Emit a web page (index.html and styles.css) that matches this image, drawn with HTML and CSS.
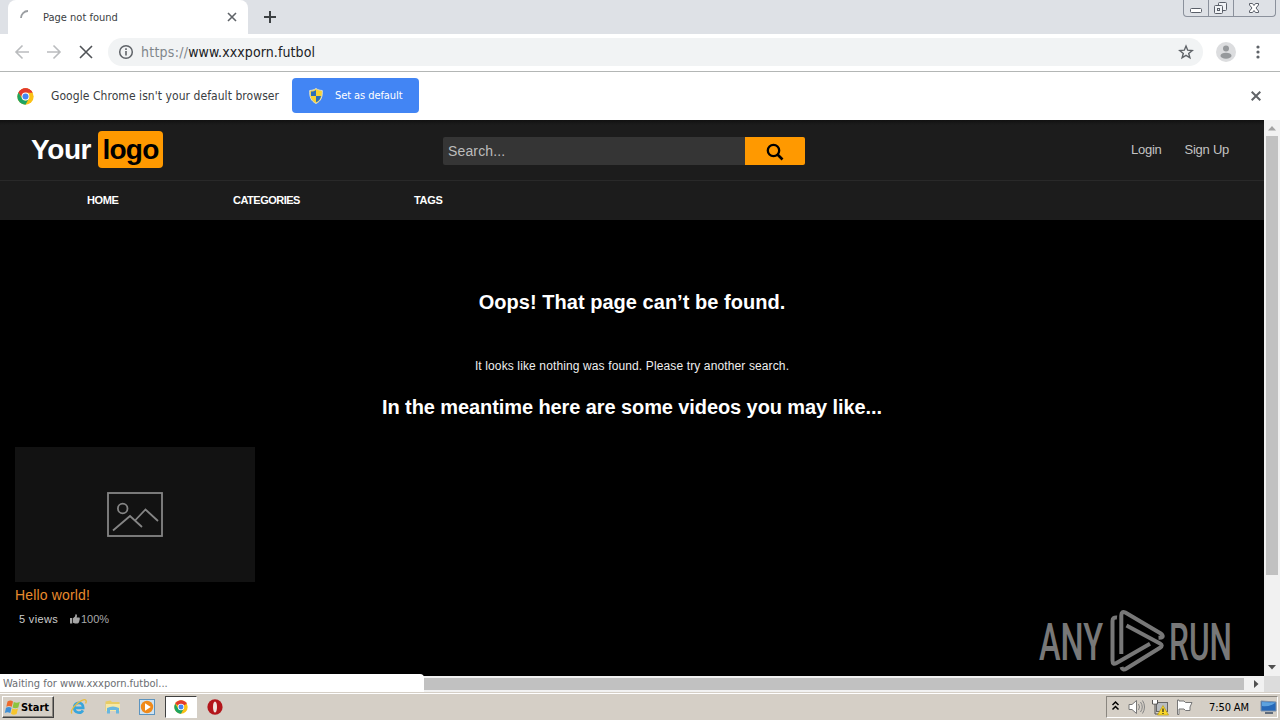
FILE: index.html
```
<!DOCTYPE html>
<html lang="en">
<head>
  <meta charset="utf-8">
  <title>Page not found</title>
  <link rel="stylesheet" href="styles.css">
</head>
<body>
<div class="screen">

  <div class="tabstrip">
    <div class="tab">
      <svg class="spinner" width="16" height="16" viewBox="0 0 16 16"><path d="M1 9A7 7 0 0 1 8 2" fill="none" stroke="#9a9da1" stroke-width="1.800"/></svg>
      <span class="tab-title">Page not found</span>
      <svg class="tab-close" width="10" height="10" viewBox="0 0 10 10"><path d="M1 1l8 8M9 1l-8 8" stroke="#5f6368" stroke-width="1.600"/></svg>
    </div>
    <svg class="tab-new" width="14" height="14" viewBox="0 0 14 14"><path d="M7 1v12M1 7h12" stroke="#3c4043" stroke-width="2"/></svg>
    <div class="win-buttons">
      <span class="win-btn"><svg width="24" height="16"><rect x="6.500" y="8.500" width="11" height="4" rx="1" fill="#fff" stroke="#5a5f69"/></svg></span>
      <span class="win-btn"><svg width="24" height="16"><g fill="#f1f3f6" stroke="#5a5f69"><rect x="9.500" y="2.500" width="8" height="8" rx="1"/><rect x="5.500" y="5.500" width="8" height="8" rx="1"/><rect x="8.500" y="8.500" width="2" height="2"/></g></svg></span>
      <span class="win-btn wide"><svg width="40" height="16"><path d="M15.500 3.500h3l1.500 2 1.500-2h3v1.500l-2.500 3 2.500 3v1.500h-3l-1.500-2-1.500 2h-3v-1.500l2.500-3-2.500-3z" fill="#fff" stroke="#5a5f69"/></svg></span>
    </div>
  </div>

  <div class="toolbar">
    <svg class="nav-icon" width="16" height="16" viewBox="0 0 16 16"><path d="M15 8H2M8.500 1.500L2 8l6.500 6.500" fill="none" stroke="#babcbe" stroke-width="1.600"/></svg>
    <svg class="nav-icon" width="16" height="16" viewBox="0 0 16 16"><path d="M1 8h13M7.500 1.500L14 8l-6.500 6.500" fill="none" stroke="#babcbe" stroke-width="1.600"/></svg>
    <svg class="nav-icon" width="16" height="16" viewBox="0 0 16 16"><path d="M2 2l12 12M14 2L2 14" stroke="#505357" stroke-width="1.600"/></svg>
    <div class="omnibox">
      <svg width="16" height="16" viewBox="0 0 16 16"><circle cx="8" cy="8" r="6.300" fill="none" stroke="#5f6368" stroke-width="1.500"/><path d="M8 7v4.500M8 4.300v1.600" stroke="#5f6368" stroke-width="1.600"/></svg>
      <span class="url"><span class="scheme">https://</span>www.xxxporn.futbol</span>
      <svg class="star" width="16" height="16" viewBox="0 0 16 16"><path d="M8 2l1.700 4.200 4.500.3-3.500 2.900 1.200 4.400L8 11.400l-3.900 2.400 1.200-4.400L1.800 6.500l4.500-.3z" fill="none" stroke="#5f6368" stroke-width="1.400"/></svg>
    </div>
    <svg class="avatar" width="20" height="20" viewBox="0 0 20 20"><circle cx="10" cy="10" r="10" fill="#dcdddf"/><circle cx="10" cy="6.500" r="3" fill="#96999c"/><ellipse cx="10" cy="13.700" rx="5.500" ry="3" fill="#96999c"/></svg>
    <svg width="4" height="14" viewBox="0 0 4 14"><g fill="#5f6368"><circle cx="2" cy="2" r="1.600"/><circle cx="2" cy="7" r="1.600"/><circle cx="2" cy="12" r="1.600"/></g></svg>
  </div>

  <div class="infobar">
    <svg width="17" height="17" viewBox="0 0 48 48"><circle cx="24" cy="24" r="23" fill="#fbc116"/><path d="M24 24L4.100 12.500A23 23 0 0 1 43.900 12.500H24z" fill="#e33b2e"/><path d="M24 13A11 11 0 0 0 14 29L4.100 12.500A23 23 0 0 1 43.900 12.500z" fill="#e33b2e"/><path d="M4.100 12.500A23 23 0 0 0 24 47l9.500-17.500A11 11 0 0 1 14 29z" fill="#1da462"/><circle cx="24" cy="24" r="11" fill="#fff"/><circle cx="24" cy="24" r="8.500" fill="#4586f3"/></svg>
    <span class="infobar-text">Google Chrome isn't your default browser</span>
    <div class="default-btn">
      <svg width="14" height="16" viewBox="0 0 14 16"><path d="M7 .5C5 2 3 2.300.7 2.500.4 9 2 13 7 15.500 12 13 13.600 9 13.300 2.500 11 2.300 9 2 7 .5z" fill="#f8d333"/><path d="M7 2C5.500 3 4 3.500 2 3.600V8h5zM7 8h5c-.4 3-2 5-5 6.300z" fill="#2c6fb8"/><path d="M7 .5C5 2 3 2.300.7 2.500.4 9 2 13 7 15.500 12 13 13.600 9 13.300 2.500 11 2.300 9 2 7 .5z" fill="none" stroke="#d9dccf"/></svg>
      <span>Set as default</span>
    </div>
    <svg class="infobar-close" width="10" height="10" viewBox="0 0 10 10"><path d="M.7.700l8.600 8.600M9.300.700L.7 9.300" stroke="#606367" stroke-width="2"/></svg>
  </div>

  <div class="viewport">
    <div class="page">
      <div class="header">
        <div class="logo"><span class="logo-first">Your</span><span class="logo-box">logo</span></div>
        <div class="search">
          <div class="search-input">Search...</div>
          <div class="search-btn"><svg width="18" height="18" viewBox="0 0 18 18"><circle cx="7.500" cy="7.500" r="5.700" fill="none" stroke="#000" stroke-width="2.300"/><path d="M11.500 11.500l5 5" stroke="#000" stroke-width="2.600"/></svg></div>
        </div>
        <div class="account"><span class="login">Login</span><span class="signup">Sign Up</span></div>
      </div>
      <div class="menu">
        <span class="m-home">HOME</span><span class="m-cat">CATEGORIES</span><span class="m-tags">TAGS</span>
      </div>
      <div class="content">
        <h1>Oops! That page can’t be found.</h1>
        <p class="nothing">It looks like nothing was found. Please try another search.</p>
        <h2>In the meantime here are some videos you may like...</h2>
        <div class="video">
          <div class="thumb"><svg width="56" height="45" viewBox="0 0 56 45"><g fill="none" stroke="#858585" stroke-width="1.800"><rect x="1" y="1" width="54" height="43"/><circle cx="15.700" cy="16.500" r="4.800"/><path d="M6 38.500L23 24l12 11M28.500 28L38.500 17.500 51 29"/></g></svg></div>
          <div class="video-title">Hello world!</div>
          <div class="video-meta">
            <span class="views">5 views</span>
            <svg width="10" height="10" viewBox="0 0 10 10"><path d="M0 4h2.300v5.500H0zM3 4.300L5 2.500 5.500.3C7 0 7.300 1.500 6.600 3.500h2.500c1 .2.900 1.200.4 1.600.4.500.3 1.200-.2 1.500.2.600 0 1.100-.4 1.300.1 1-.5 1.500-1.400 1.500H5L3 8.700z" fill="#a5a5a5"/></svg>
            <span class="rate">100%</span>
          </div>
        </div>
      </div>
      <svg class="watermark" width="205" height="68" viewBox="0 0 205 68">
        <text x="4" y="52" font-size="52" textLength="64" lengthAdjust="spacingAndGlyphs">ANY</text>
        <text x="134" y="52" font-size="52" textLength="63" lengthAdjust="spacingAndGlyphs">RUN</text>
        <g fill="none" stroke="#787878" stroke-width="4" stroke-linejoin="round">
          <path d="M82 9.500Q77.500 9 77.500 13v39.500q0 5 4 2.500L115 35.700"/>
          <path d="M86.300 46V7.500q0-5 4-3L125 25q4.500 3 1.500 4.500l-3 .2"/>
          <path d="M91.500 17.500L125 35.500q3.500 2 0 4.300L91.500 60.500q-4 2.500-5-1.500"/>
        </g>
      </svg>
    </div>
    <div class="scroll-v">
      <svg width="16" height="16"><path d="M4 10.500h8L8 6z" fill="#a3a3a3"/></svg>
      <div class="thumb-v"></div>
      <svg width="16" height="16"><path d="M4 5h8l-4 4.500z" fill="#505050"/></svg>
    </div>
  </div>

  <div class="bottom">
    <div class="status">Waiting for www.xxxporn.futbol...</div>
    <div class="thumb-h"></div>
    <svg width="20" height="16"><path d="M10 4v8l4.500-4z" fill="#505050"/></svg>
    <div class="corner"></div>
  </div>

  <div class="taskbar">
    <div class="start">
      <svg width="17" height="17" viewBox="0 0 17 17"><path d="M3.500 2.500q3-2 5.500 0L7.800 7.800q-3-1.800-5.500 0z" fill="#ee6a2c"/><path d="M9.800 3q3 1.700 6-.2L14.300 8.500q-3 1.500-5.700 0z" fill="#8cc43e"/><path d="M2 8.800q3-1.800 5.500 0L6.300 14q-3-1.700-5.500 0z" fill="#3f8fd6"/><path d="M8.300 9.500q3 1.600 5.700 0L12.600 15q-3 1.600-5.600-.2z" fill="#f7c52d"/></svg>
      <span class="start-text">Start</span>
    </div>
    <div class="quick">
      <svg width="18" height="18" viewBox="0 0 18 18"><path d="M4.500 9.800h8.700C13.500 3.200 4.200 3.400 4.200 9.600c0 6 7 6.200 8.700 2.700" fill="none" stroke="#38a5dc" stroke-width="2.700"/><path d="M2 15.500C-.5 13 6 4.500 12 2.300c4-1.500 5 .2 3.600 3.200" fill="none" stroke="#e8bd3e" stroke-width="1.300"/></svg>
      <svg width="18" height="18" viewBox="0 0 18 18"><path d="M1.500 3.500l5-1 1.500 1.500h7.500v9h-14z" fill="#e8cc65"/><path d="M2 6h14v7H2z" fill="#f6e8a5"/><path d="M3 15.500V10q6-3 12 0v5.500h-3V12H6v3.500z" fill="#68b7df"/></svg>
      <svg width="18" height="18" viewBox="0 0 18 18"><rect x="1.500" y="1.500" width="15" height="15" fill="#cfe3f2" stroke="#5c94bf"/><circle cx="9" cy="9" r="6.200" fill="#f08a1a"/><path d="M7 5.200v7.600L12.800 9z" fill="#fff"/></svg>
      <div class="active"><svg width="14" height="14" viewBox="0 0 48 48"><circle cx="24" cy="24" r="23" fill="#fbc116"/><path d="M24 24L4.100 12.500A23 23 0 0 1 43.900 12.500z" fill="#e33b2e"/><path d="M4.100 12.500A23 23 0 0 0 24 47l9.500-17.500L14 29z" fill="#1da462"/><circle cx="24" cy="24" r="11" fill="#fff"/><circle cx="24" cy="24" r="8.500" fill="#4586f3"/></svg></div>
      <svg width="18" height="18" viewBox="0 0 18 18"><ellipse cx="9" cy="9" rx="7.600" ry="7.800" fill="#b3161b"/><ellipse cx="9" cy="9" rx="2" ry="5.500" fill="#f0e5e0"/></svg>
    </div>
    <div class="tray">
      <svg width="9" height="14" viewBox="0 0 9 14"><path d="M1.500 5l3-3 3 3M1.500 9.500l3-3 3 3" fill="none" stroke="#000" stroke-width="1.500"/></svg>
      <svg class="ic-sound" width="18" height="16" viewBox="0 0 18 16"><path d="M1 5.500h3l4.500-4v13l-4.500-4H1z" fill="#fff" stroke="#777"/><path d="M10.500 5q2 3 0 6M12.500 3q3.500 5 0 10M14.500 1.500q4 6.500 0 13" fill="none" stroke="#858585"/></svg>
      <svg class="ic-net" width="17" height="17" viewBox="0 0 17 17"><rect x="4.500" y="3.500" width="11" height="9" fill="#b8bcc0" stroke="#666"/><path d="M.5 1v4h5V1M3 5v10h4" fill="none" stroke="#555"/><path d="M1 1h4v3.500H1z" fill="#fff"/><path d="M11 6.500L16.500 16h-11z" fill="#f9d72b" stroke="#b39300" stroke-width=".6"/><path d="M11 9.500v3.500M11 14v1" stroke="#222" stroke-width="1.200"/></svg>
      <svg class="ic-flag" width="17" height="16" viewBox="0 0 17 16"><path d="M1.500 1v14.500h1.500V10h5l1.500 1.500H14V8l2-4.500H9.500L8 2H3V1z" fill="#fff" stroke="#777"/></svg>
      <span class="clock">7:50 AM</span>
      <svg class="ic-desk" width="17" height="14" viewBox="0 0 17 14"><path d="M1 1l15 1v9H1z" fill="#2668b8" stroke="#7b8fa8"/><path d="M2 6q7 1 13-3v-.5L2 2z" fill="#5da2df"/><path d="M5 13h8" stroke="#384b63" stroke-width="1.500"/></svg>
    </div>
  </div>

</div>
</body>
</html>
```

FILE: styles.css
```
* { box-sizing: border-box; }

body {
  margin: 0;
  overflow: hidden;
  font-family: "Liberation Sans", Arial, sans-serif;
}

svg { display: block; flex: none; }

.screen {
  width: 1280px;
  height: 720px;
  display: flex;
  flex-direction: column;
  background: #fff;
  white-space: nowrap;
}

/* browser chrome */
.tabstrip, .toolbar, .infobar, .status, .clock {
  font-family: "DejaVu Sans Condensed", "DejaVu Sans", Tahoma, sans-serif;
  font-stretch: condensed;
}

.tabstrip {
  height: 34px;
  background: #dee1e6;
  display: flex;
  align-items: center;
}

.tab {
  width: 240px;
  height: 34px;
  margin-left: 8px;
  padding: 0 11px 0 12px;
  background: #fff;
  border-radius: 8px 8px 0 0;
  display: flex;
  align-items: center;
}

.tab-title {
  margin-left: 7px;
  font-size: 11px;
  color: #3c4043;
}

.tab-close { margin-left: auto; }
.tab-new { margin-left: 15px; }

.win-buttons {
  height: 17px;
  margin: 0 4px 0 auto;
  align-self: flex-start;
  display: flex;
  border: 1px solid #8b919c;
  border-top: 0;
  border-radius: 0 0 4px 4px;
}

.win-btn { width: 25px; border-right: 1px solid #8b919c; }
.win-btn.wide { width: 41px; border-right: 0; }

.toolbar {
  height: 38px;
  padding: 0 20px 2px 14px;
  border-bottom: 1px solid #b3b6b5;
  display: flex;
  align-items: center;
}

.nav-icon { margin-right: 16px; }

.omnibox {
  width: 1095px;
  height: 28px;
  margin-left: -2px;
  padding: 0 9px 0 10px;
  border-radius: 14px;
  background: #f1f3f4;
  display: flex;
  align-items: center;
}

.url { margin-left: 7px; font-size: 14px; color: #202124; letter-spacing: 0.1px; }
.scheme { color: #80868b; letter-spacing: 0.25px; }
.star { margin-left: auto; }
.avatar { margin: 0 auto 0 13px; }

.infobar {
  height: 48px;
  padding: 0 19px 0 17px;
  display: flex;
  align-items: center;
}

.infobar-text { width: 229px; margin: 0 12px 0 17px; font-size: 12px; color: #3a3d41; letter-spacing: 0.06px; }

.default-btn {
  width: 127px;
  height: 35px;
  margin-bottom: 1px;
  padding-left: 17px;
  border-radius: 4px;
  background: #4285f4;
  color: #fff;
  font-size: 11px;
  letter-spacing: -0.08px;
  display: flex;
  align-items: center;
  gap: 12px;
}

.infobar-close { margin-left: auto; }

/* web page */
.viewport { height: 556px; display: flex; }

.page {
  position: relative;
  width: 1264px;
  background: #000;
  color: #fff;
}

.header {
  height: 61px;
  background: linear-gradient(#111, #1c1c1c 5px);
  border-bottom: 1px solid #292929;
  display: flex;
}

.logo {
  width: 443px;
  padding: 11px 0 0 31px;
  display: flex;
  font-size: 28px;
  font-weight: bold;
  line-height: 37px;
}

.logo-first { width: 67px; letter-spacing: -0.4px; }

.logo-box {
  width: 65px;
  height: 37px;
  border-radius: 4px;
  background: #ff9900;
  color: #000;
  text-align: center;
  letter-spacing: -0.8px;
}

.search { width: 362px; height: 28px; margin-top: 17px; display: flex; }

.search-input {
  width: 302px;
  padding-left: 5px;
  border-radius: 2px 0 0 2px;
  background: #353535;
  color: #bcbcbc;
  font-size: 14px;
  line-height: 28px;
  letter-spacing: 0.15px;
}

.search-btn {
  width: 60px;
  padding: 6px 0 0 21px;
  border-radius: 0 2px 2px 0;
  background: #ff9900;
}

.account {
  margin: 0 35px 0 auto;
  display: flex;
  gap: 23px;
  font-size: 13px;
  line-height: 59px;
  letter-spacing: -0.25px;
  color: #c3c3c3;
}

.menu {
  height: 39px;
  padding-left: 87px;
  background: #1c1c1c;
  display: flex;
  font-size: 11px;
  font-weight: bold;
  line-height: 39px;
}

.m-home { width: 146px; letter-spacing: -0.4px; }
.m-cat { width: 181px; letter-spacing: -0.5px; }
.m-tags { letter-spacing: -0.3px; }

.content { padding: 67px 15px 0; }

h1, h2 {
  margin: 0;
  font-size: 20px;
  line-height: 30px;
  text-align: center;
}

h1 { letter-spacing: 0.03px; }
h2 { letter-spacing: -0.09px; }

.nothing {
  margin: 39px 0 16px;
  font-size: 12px;
  line-height: 20px;
  letter-spacing: 0.125px;
  color: #eee;
  text-align: center;
}

.video { width: 240px; margin-top: 25px; }

.thumb {
  height: 135px;
  background: #121212;
  display: flex;
  align-items: center;
  justify-content: center;
}

.video-title { font-size: 14px; line-height: 26px; letter-spacing: 0.16px; color: #e88b2d; }

.video-meta {
  margin: 3px 0 0 4px;
  display: flex;
  align-items: center;
  font-size: 11px;
  line-height: 16px;
  color: #ccc;
}

.views { width: 51px; letter-spacing: 0.35px; }
.rate { margin-left: 1px; color: #aaa; }

/* sits over the page content */
.watermark { position: absolute; right: 24px; bottom: 0; }

.watermark text {
  font-family: Roboto, sans-serif;
  font-weight: 500;
  fill: #787878;
}

/* scrollbars */
.scroll-v {
  width: 16px;
  background: #f1f1f1;
  display: flex;
  flex-direction: column;
  justify-content: space-between;
}

.thumb-v { width: 12px; height: 439px; margin: 0 2px auto; background: #c1c1c1; }

.bottom { height: 16px; background: #f1f1f1; display: flex; }

.status {
  width: 424px;
  height: 18px;
  margin-top: -2px;
  padding-left: 3px;
  background: #fff;
  border-top-right-radius: 4px;
  font-size: 11px;
  line-height: 19px;
  color: #6b6e72;
  position: relative;
}

.thumb-h { width: 820px; height: 12px; margin-top: 2px; background: #c1c1c1; }
.corner { width: 16px; background: #dcdcdc; }

/* taskbar */
.taskbar {
  height: 28px;
  padding: 3px 2px 2px;
  background: #d5cfc6;
  box-shadow: inset 0 1px #d5cfc6, inset 0 2px #fff;
  display: flex;
}

.start {
  width: 52px;
  height: 22px;
  margin-top: 1px;
  padding-left: 1px;
  border: 1px solid;
  border-color: #fff #404040 #404040 #fff;
  box-shadow: inset -1px -1px #8a867f;
  display: flex;
  align-items: center;
}

.start-text {
  font-family: "DejaVu Sans Condensed", "DejaVu Sans", Tahoma, sans-serif;
  font-stretch: condensed;
  font-size: 11px;
  font-weight: bold;
  letter-spacing: -0.05px;
}

.quick { margin-left: 16px; display: flex; align-items: center; }
.quick > svg { margin-right: 16px; }
.quick > svg:nth-child(3) { margin-right: 9px; }

.active {
  width: 32px;
  height: 22px;
  margin-right: 9px;
  background: #fff;
  border: 1px solid;
  border-color: #404040 #fff #fff #404040;
  display: flex;
  align-items: center;
  justify-content: center;
}

.tray {
  width: 172px;
  height: 22px;
  margin: 1px 0 0 auto;
  padding-left: 4px;
  border: 1px solid;
  border-color: #8a867f #fff #fff #8a867f;
  display: flex;
  align-items: center;
}

.ic-sound { margin-left: 8px; }
.ic-net { margin-left: 6px; }
.ic-flag { margin-left: 7px; }
.clock { width: 51px; margin-left: 16px; font-size: 11px; letter-spacing: -0.1px; }
```
